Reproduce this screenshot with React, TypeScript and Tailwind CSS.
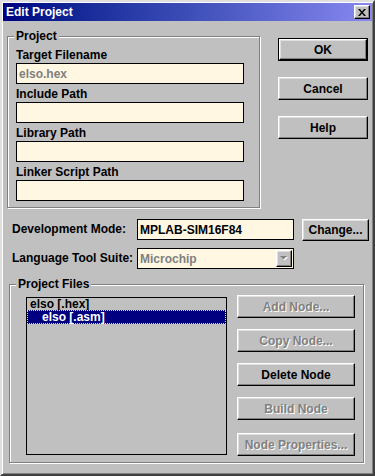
import React from 'react';

const raised =
  "border border-t-white border-l-white border-r-black border-b-black shadow-[inset_-1px_-1px_0_#808080,inset_1px_1px_0_#dfdfdf]";
const etched = "border border-[#808080] shadow-[inset_1px_1px_0_#fff,1px_1px_0_#fff]";
const field = "border border-black bg-[#fff7e1]";

interface BtnProps {
  label: string;
  disabled?: boolean;
  isDefault?: boolean;
  className?: string;
}

function Btn({ label, disabled = false, isDefault = false, className = "" }: BtnProps) {
  const text = disabled ? "text-[#808080] [text-shadow:1px_1px_0_#fff]" : "text-black";
  if (isDefault) {
    return (
      <div className={`border border-black flex ${className}`}>
        <div className={`flex-1 flex items-center justify-center ${raised} ${text}`}>{label}</div>
      </div>
    );
  }
  return <div className={`flex items-center justify-center ${raised} ${text} ${className}`}>{label}</div>;
}

function GroupLabel({ text }: { text: string }) {
  return (
    <span className="absolute left-[6px] top-[-8px] px-[2px] bg-[#c0c0c0] leading-[15px]">{text}</span>
  );
}

function PathField({ label, value }: { label: string; value?: string }) {
  return (
    <div className="flex flex-col">
      <div className="h-[16px] leading-[16px]">{label}</div>
      <div className={`w-[228px] h-[21px] ${field} flex items-center pl-[2px] text-[#808080]`}>{value}</div>
    </div>
  );
}

export default function App() {
  return (
    <div className="w-[375px] h-[476px] bg-[#c0c0c0] border-2 border-t-[#dfdfdf] border-l-[#dfdfdf] border-r-[#404040] border-b-[#404040] shadow-[inset_1px_1px_0_#fff,inset_-1px_-1px_0_#808080] p-px font-['Liberation_Sans',Arial,sans-serif] text-[12px] font-bold text-black select-none">
      {/* title bar */}
      <div className="h-[18px] flex items-center justify-between pl-[3px] pr-[2px] bg-linear-to-r from-[#000080] to-[#8888f0]">
        <span className="text-white text-[12px] leading-none">Edit Project</span>
        <div className={`w-[16px] h-[14px] bg-[#c0c0c0] flex items-center justify-center ${raised}`}>
          <svg width="8" height="7" viewBox="0 0 8 7">
            <path d="M0 0h2l2 2.5L6 0h2L5 3.5 8 7H6L4 4.5 2 7H0l3-3.5z" fill="#000" />
          </svg>
        </div>
      </div>

      {/* top section */}
      <div className="flex items-start">
        <div className={`relative ml-[4px] mt-[15px] w-[253px] h-[172px] ${etched} pt-[10px] pl-[8px]`}>
          <GroupLabel text="Project" />
          <div className="flex flex-col gap-[2px]">
            <PathField label="Target Filename" value="elso.hex" />
            <PathField label="Include Path" />
            <PathField label="Library Path" />
            <PathField label="Linker Script Path" />
          </div>
        </div>
        <div className="ml-[18px] mt-[17px] flex flex-col gap-[16px]">
          <Btn label="OK" isDefault className="w-[90px] h-[23px]" />
          <Btn label="Cancel" className="w-[90px] h-[23px]" />
          <Btn label="Help" className="w-[90px] h-[23px]" />
        </div>
      </div>

      {/* development mode */}
      <div className="mt-[11px] pl-[9px] flex items-start">
        <div className="w-[125px] h-[21px] leading-[21px]">Development Mode:</div>
        <div className={`w-[157px] h-[21px] ${field} flex items-center pl-[2px]`}>MPLAB-SIM16F84</div>
        <Btn label="Change..." className="ml-[8px] w-[67px] h-[22px]" />
      </div>

      {/* language tool suite */}
      <div className="mt-[7px] pl-[9px] flex items-start">
        <div className="w-[125px] h-[21px] leading-[21px]">Language Tool Suite:</div>
        <div className={`w-[157px] h-[21px] ${field} flex items-center justify-between pl-[2px] pr-px`}>
          <span className="text-[#808080]">Microchip</span>
          <div className={`w-[16px] h-[17px] bg-[#c0c0c0] flex items-center justify-center ${raised}`}>
            <svg width="8" height="5" viewBox="0 0 8 5">
              <path d="M1 1h7L4.5 4.5z" fill="#fff" />
              <path d="M0 0h7L3.5 3.5z" fill="#808080" />
            </svg>
          </div>
        </div>
      </div>

      {/* project files */}
      <div className={`relative mt-[15px] ml-[6px] w-[355px] h-[179px] ${etched} pt-[10px] pl-[16px] flex items-start`}>
        <GroupLabel text="Project Files" />
        <div className="mt-[2px] w-[201px] h-[158px] border border-black bg-[#c0c0c0] flex flex-col">
          <div className="h-[12px] leading-[12px] pl-[3px]">elso [.hex]</div>
          <div className="h-[14px] leading-[12px] pl-[14px] bg-[#000080] text-white border border-dotted border-[#d8d8d8]">
            elso [.asm]
          </div>
        </div>
        <div className="ml-[10px] flex flex-col gap-[11px]">
          <Btn label="Add Node..." disabled className="w-[118px] h-[23px]" />
          <Btn label="Copy Node..." disabled className="w-[118px] h-[23px]" />
          <Btn label="Delete Node" className="w-[118px] h-[23px]" />
          <Btn label="Build Node" disabled className="w-[118px] h-[23px]" />
          <Btn label="Node Properties..." disabled className="mt-[2px] w-[118px] h-[23px]" />
        </div>
      </div>
    </div>
  );
}
